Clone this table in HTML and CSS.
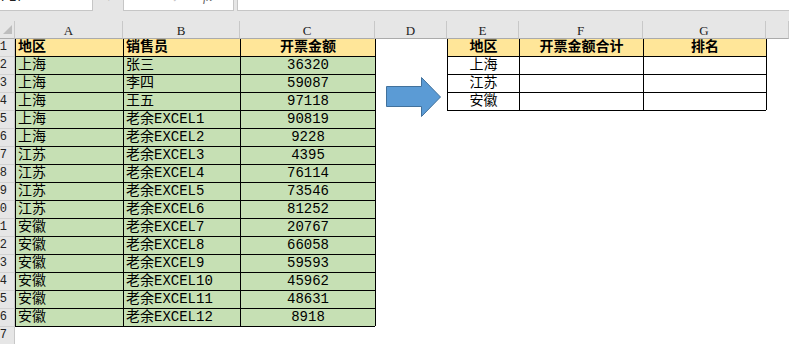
FILE: index.html
```html
<!DOCTYPE html>
<html lang="zh-CN">
<head>
<meta charset="utf-8">
<title>Sheet</title>
<link rel="stylesheet" href="styles.css">
</head>
<body>
<div class="app">
  <div class="fbar">
    <div class="box namebox"><span class="cut">F17</span></div>
    <div class="grip"><span class="cut dots">⁝</span></div>
    <div class="box fbtns"><span class="cut x">✕</span><span class="cut ok">✓</span><span class="cut fx">fx</span></div>
    <div class="box finput"></div>
  </div>

  <div class="sheet">
    <!-- column headers -->
    <div class="corner"><span class="tri"></span></div>
    <div class="ch">A</div><div class="ch">B</div><div class="ch">C</div><div class="ch">D</div>
    <div class="ch">E</div><div class="ch">F</div><div class="ch">G</div><div class="ch"></div>

    <!-- row 1 -->
    <div class="rh first"><span>1</span></div>
    <div class="c y bl b">地区</div>
    <div class="c y bl b">销售员</div>
    <div class="c y bl b ctr">开票金额</div>
    <div class="c bl"></div>
    <div class="c y bl b ctr">地区</div>
    <div class="c y bl b ctr">开票金额合计</div>
    <div class="c y bl b ctr">排名</div>
    <div class="c bl"></div>

    <!-- row 2 -->
    <div class="rh"><span>2</span></div>
    <div class="c g bl bt">上海</div><div class="c g bl bt">张三</div><div class="c g bl bt ctr">36320</div>
    <div class="c bl"></div>
    <div class="c bl bt ctr">上海</div><div class="c bl bt"></div><div class="c bl bt"></div><div class="c bl"></div>

    <!-- row 3 -->
    <div class="rh"><span>3</span></div>
    <div class="c g bl bt">上海</div><div class="c g bl bt">李四</div><div class="c g bl bt ctr">59087</div>
    <div class="c bl"></div>
    <div class="c bl bt ctr">江苏</div><div class="c bl bt"></div><div class="c bl bt"></div><div class="c bl"></div>

    <!-- row 4 -->
    <div class="rh"><span>4</span></div>
    <div class="c g bl bt">上海</div><div class="c g bl bt">王五</div><div class="c g bl bt ctr">97118</div>
    <div class="c bl"></div>
    <div class="c bl bt ctr">安徽</div><div class="c bl bt"></div><div class="c bl bt"></div><div class="c bl"></div>

    <!-- row 5 -->
    <div class="rh"><span>5</span></div>
    <div class="c g bl bt">上海</div><div class="c g bl bt">老余EXCEL1</div><div class="c g bl bt ctr">90819</div>
    <div class="c bl"></div>
    <div class="c bt"></div><div class="c bt"></div><div class="c bt"></div><div class="c"></div>

    <!-- row 6 -->
    <div class="rh"><span>6</span></div>
    <div class="c g bl bt">上海</div><div class="c g bl bt">老余EXCEL2</div><div class="c g bl bt ctr">9228</div>
    <div class="c bl"></div><div class="c"></div><div class="c"></div><div class="c"></div><div class="c"></div>

    <!-- row 7 -->
    <div class="rh"><span>7</span></div>
    <div class="c g bl bt">江苏</div><div class="c g bl bt">老余EXCEL3</div><div class="c g bl bt ctr">4395</div>
    <div class="c bl"></div><div class="c"></div><div class="c"></div><div class="c"></div><div class="c"></div>

    <!-- row 8 -->
    <div class="rh"><span>8</span></div>
    <div class="c g bl bt">江苏</div><div class="c g bl bt">老余EXCEL4</div><div class="c g bl bt ctr">76114</div>
    <div class="c bl"></div><div class="c"></div><div class="c"></div><div class="c"></div><div class="c"></div>

    <!-- row 9 -->
    <div class="rh"><span>9</span></div>
    <div class="c g bl bt">江苏</div><div class="c g bl bt">老余EXCEL5</div><div class="c g bl bt ctr">73546</div>
    <div class="c bl"></div><div class="c"></div><div class="c"></div><div class="c"></div><div class="c"></div>

    <!-- row 10 -->
    <div class="rh"><span>10</span></div>
    <div class="c g bl bt">江苏</div><div class="c g bl bt">老余EXCEL6</div><div class="c g bl bt ctr">81252</div>
    <div class="c bl"></div><div class="c"></div><div class="c"></div><div class="c"></div><div class="c"></div>

    <!-- row 11 -->
    <div class="rh"><span>11</span></div>
    <div class="c g bl bt">安徽</div><div class="c g bl bt">老余EXCEL7</div><div class="c g bl bt ctr">20767</div>
    <div class="c bl"></div><div class="c"></div><div class="c"></div><div class="c"></div><div class="c"></div>

    <!-- row 12 -->
    <div class="rh"><span>12</span></div>
    <div class="c g bl bt">安徽</div><div class="c g bl bt">老余EXCEL8</div><div class="c g bl bt ctr">66058</div>
    <div class="c bl"></div><div class="c"></div><div class="c"></div><div class="c"></div><div class="c"></div>

    <!-- row 13 -->
    <div class="rh"><span>13</span></div>
    <div class="c g bl bt">安徽</div><div class="c g bl bt">老余EXCEL9</div><div class="c g bl bt ctr">59593</div>
    <div class="c bl"></div><div class="c"></div><div class="c"></div><div class="c"></div><div class="c"></div>

    <!-- row 14 -->
    <div class="rh"><span>14</span></div>
    <div class="c g bl bt">安徽</div><div class="c g bl bt">老余EXCEL10</div><div class="c g bl bt ctr">45962</div>
    <div class="c bl"></div><div class="c"></div><div class="c"></div><div class="c"></div><div class="c"></div>

    <!-- row 15 -->
    <div class="rh"><span>15</span></div>
    <div class="c g bl bt">安徽</div><div class="c g bl bt">老余EXCEL11</div><div class="c g bl bt ctr">48631</div>
    <div class="c bl"></div><div class="c"></div><div class="c"></div><div class="c"></div><div class="c"></div>

    <!-- row 16 -->
    <div class="rh"><span>16</span></div>
    <div class="c g bl bt">安徽</div><div class="c g bl bt">老余EXCEL12</div><div class="c g bl bt ctr">8918</div>
    <div class="c bl"></div><div class="c"></div><div class="c"></div><div class="c"></div><div class="c"></div>

    <!-- row 17 -->
    <div class="rh"><span>17</span></div>
    <div class="c bt"></div><div class="c bt"></div><div class="c bt"></div>
    <div class="c"></div><div class="c"></div><div class="c"></div><div class="c"></div><div class="c"></div>
  </div>

  <svg class="arrow" width="58" height="42" viewBox="0 0 58 42">
    <polygon points="1.5,10.5 36.5,10.5 36.5,1.5 55.5,21 36.5,40.5 36.5,30.5 1.5,30.5" fill="#5B9BD5" stroke="#41719C" stroke-width="1"/>
  </svg>
</div>
</body>
</html>
```

FILE: styles.css
```css
html, body {
  margin: 0;
  padding: 0;
  background: #ffffff;
  overflow: hidden;
}

.app {
  position: relative;
  width: 789px;
  height: 344px;
  overflow: hidden;
  font-family: "Liberation Mono", "Noto Sans CJK SC", monospace;
}

/* formula bar strip (cut off at the top) */
.fbar {
  display: flex;
  align-items: flex-start;
  height: 21px;
  background: #e6e6e6;
}

.box {
  box-sizing: border-box;
  height: 11px;
  background: #ffffff;
  border-bottom: 1px solid #c6c6c6;
  overflow: hidden;
}

.namebox {
  width: 93px;
  border-right: 1px solid #c6c6c6;
  padding-left: 1px;
}

.grip {
  width: 30px;
  height: 11px;
  overflow: hidden;
  display: flex;
  justify-content: center;
}

.fbtns {
  width: 111px;
  border-left: 1px solid #c6c6c6;
  border-right: 1px solid #c6c6c6;
  display: flex;
  padding-left: 15px;
  gap: 22px;
}

.finput {
  flex: 1;
  margin-left: 3px;
  border-left: 1px solid #c6c6c6;
}

.cut {
  display: block;
  margin-top: -11px;
  font-family: "Liberation Sans", sans-serif;
  font-size: 13px;
  line-height: 15px;
  color: #222;
}

.dots {
  color: #555;
  margin-top: -12px;
}

.x, .ok {
  color: #c8c8c8;
}

.fx {
  font-family: "Liberation Serif", serif;
  font-style: italic;
  color: #666;
}

/* sheet grid */
.sheet {
  display: grid;
  grid-template-columns: 15px 108px 117px 135px 72px 72px 124px 123px 1fr;
  grid-template-rows: 18px 17px repeat(16, 18px);
  font-size: 14px;
  color: #000;
}

.sheet > div {
  box-sizing: border-box;
  min-width: 0;
  overflow: hidden;
  white-space: nowrap;
}

.corner {
  background: #e6e6e6;
  border-bottom: 1px solid #ababab;
  border-right: 1px solid #c8c8c8;
  display: flex;
  justify-content: flex-end;
  align-items: flex-end;
  padding: 0 2px 4px 0;
}

.tri {
  width: 0;
  height: 0;
  border-left: 9px solid transparent;
  border-bottom: 9px solid #bdbdbd;
}

.ch {
  background: #e6e6e6;
  border-bottom: 1px solid #ababab;
  border-right: 1px solid #c8c8c8;
  font-family: "Liberation Serif", serif;
  font-size: 13px;
  line-height: 17px;
  text-align: center;
  color: #222;
  padding-top: 1px;
}

.rh {
  background: #e6e6e6;
  border-top: 1px solid #d2d2d2;
  border-right: 1px solid #c8c8c8;
  display: flex;
  justify-content: flex-end;
  padding-right: 7px;
  font-family: "Liberation Mono", monospace;
  font-size: 12px;
  line-height: 17px;
  color: #222;
}

.rh.first {
  border-top: 0;
}

.c {
  padding-left: 2px;
  line-height: 17px;
}

.ctr {
  text-align: center;
  padding-left: 0;
}

.b {
  font-weight: 700;
}

.y { background: #ffe699; }
.g { background: #c6e0b4; }
.bl { border-left: 1px solid #000; }
.bt { border-top: 1px solid #000; }

/* floating shape over the sheet */
.arrow {
  position: absolute;
  left: 385px;
  top: 76px;
}
```
